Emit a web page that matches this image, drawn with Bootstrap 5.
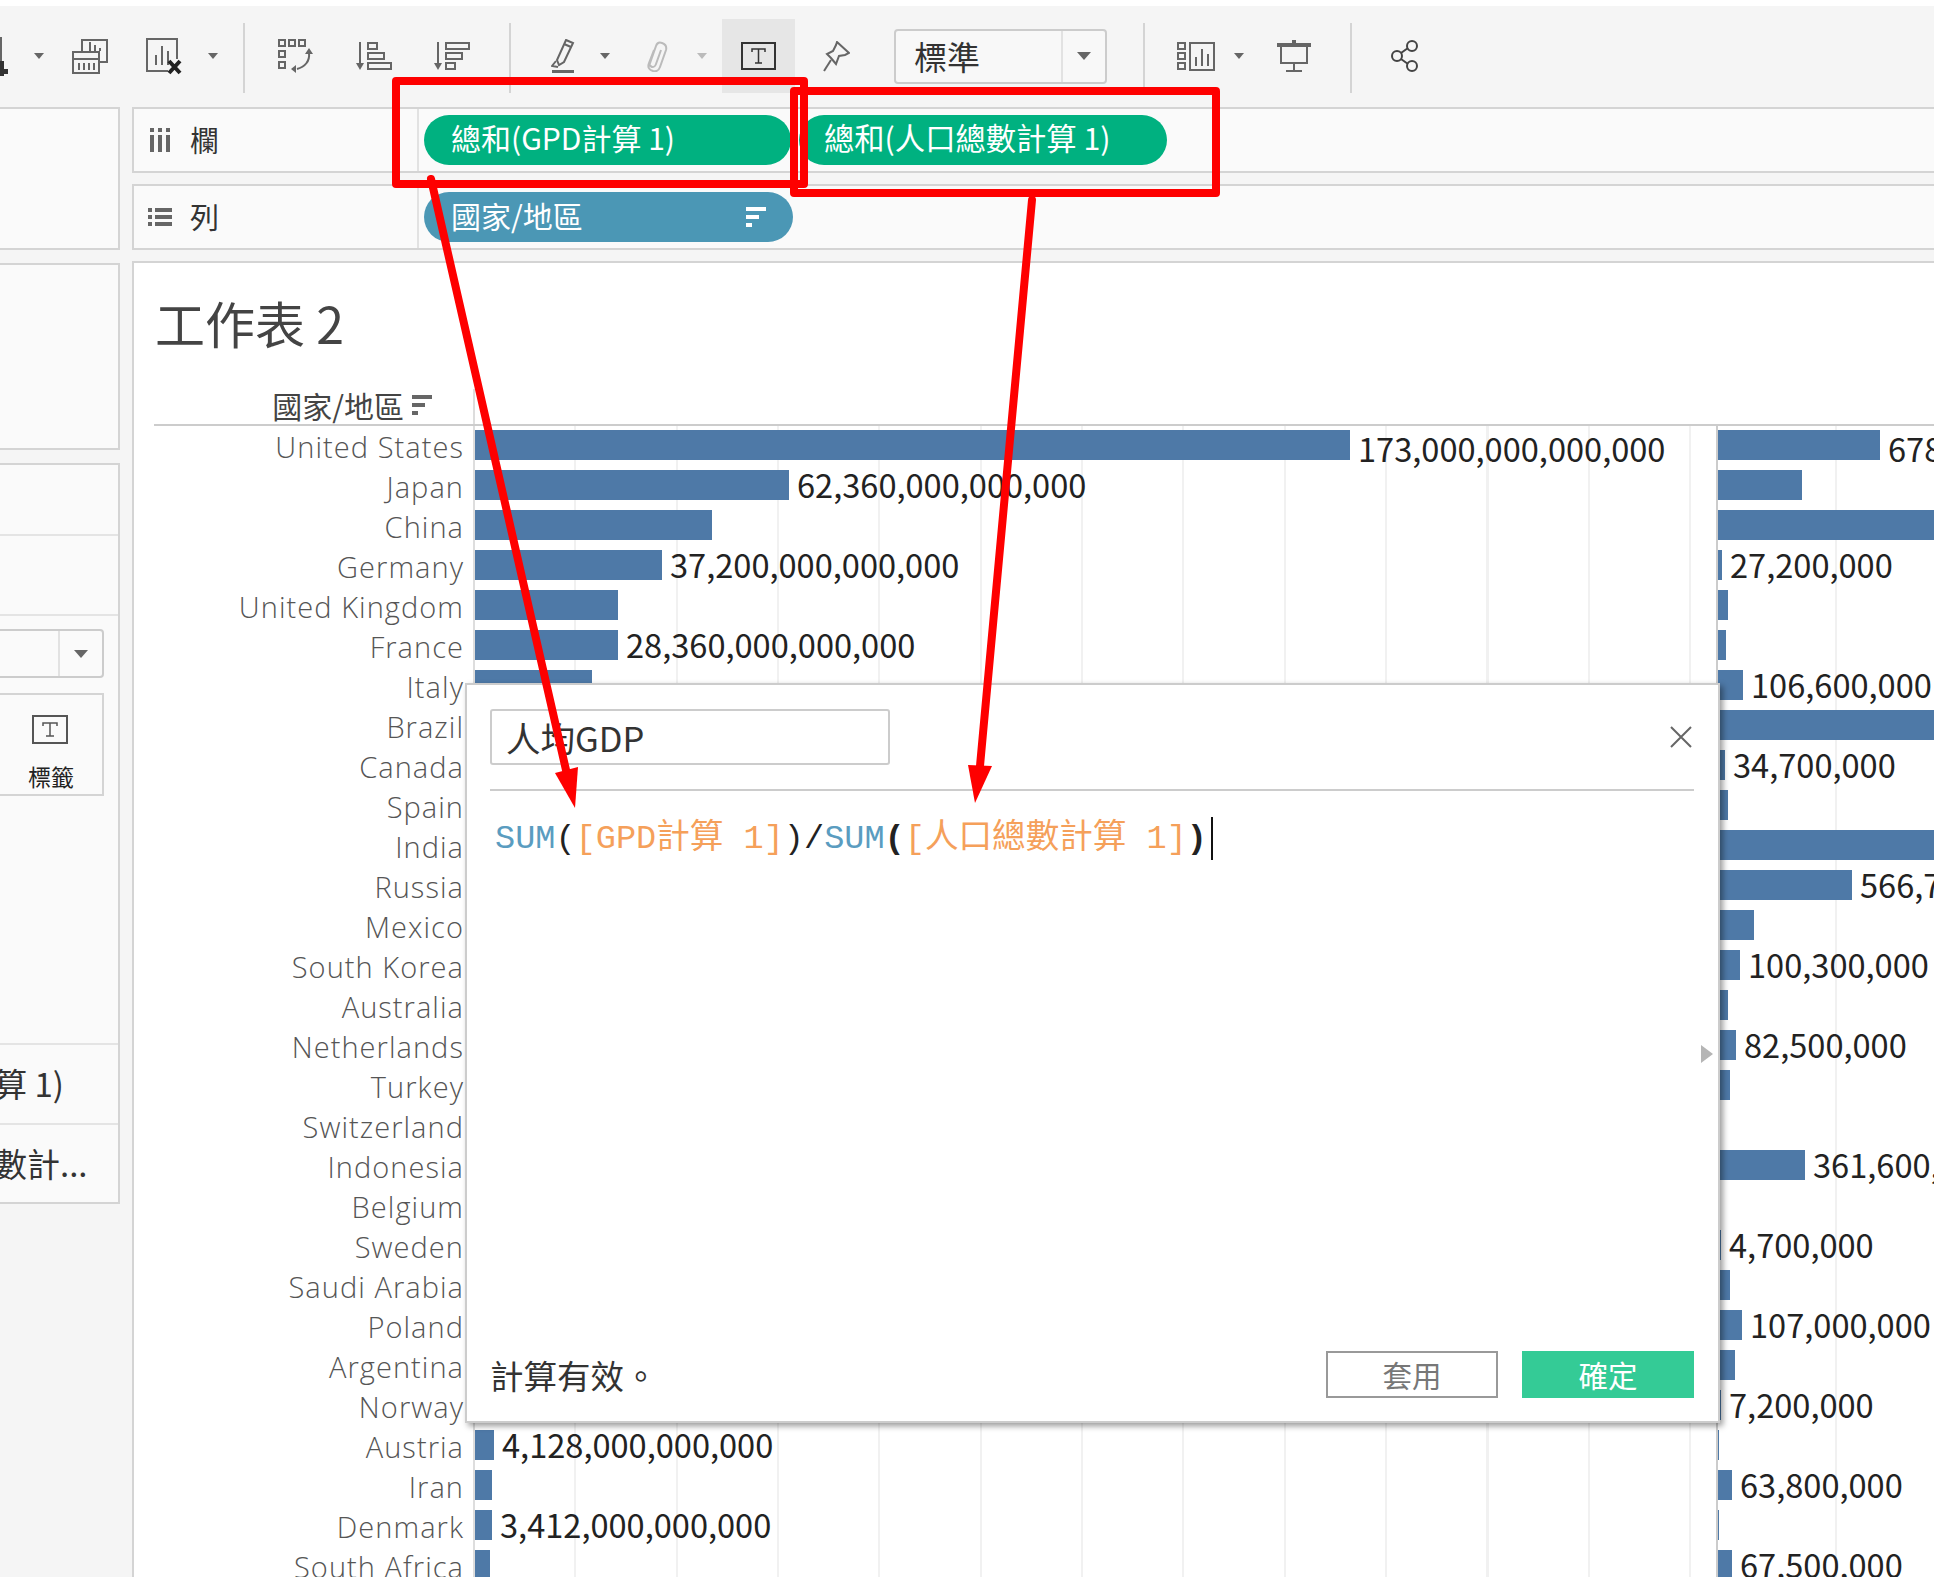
<!doctype html>
<html lang="zh-Hant">
<head>
<meta charset="utf-8">
<title>工作表 2</title>
<link href="https://cdn.jsdelivr.net/npm/bootstrap@5.3.0/dist/css/bootstrap.min.css" rel="stylesheet">
<style>
:root{--line:#d4d4d4;--cjk:"Noto Sans CJK TC","Noto Sans",sans-serif}
html,body{margin:0;width:1934px;height:1577px;overflow:hidden;background:#fff}
body{font-family:var(--cjk);color:#333;position:relative}
.appwrap{margin-top:6px;background:#f5f5f5;height:1571px;overflow:hidden}
.tbar{height:87px;padding-top:13px;margin-bottom:14px}
.tbar>*{flex:none}
.tbar svg{display:block}
.caret{width:0;height:0;border-left:5px solid transparent;border-right:5px solid transparent;border-top:6px solid #666}
.caret-lt{border-top-color:#bbb}
.caret-big{border-left-width:7px;border-right-width:7px;border-top-width:8px}
.vsep{width:2px;height:70px;background:#d4d4d4;align-self:flex-end}
.tactive{width:73px;height:74px;background:#e6e6e6}
.m15{margin-left:15px}.m19{margin-left:19px}.m25{margin-left:25px}.m26{margin-left:26px}.m27{margin-left:27px}.m28{margin-left:28px}.m32{margin-left:32px}.m33{margin-left:33px}.m35{margin-left:35px}.m36{margin-left:36px}.m38{margin-left:38px}.m39{margin-left:39px}.m40{margin-left:40px}.m42{margin-left:42px}.m43{margin-left:43px}.m44{margin-left:44px}
.modesel{width:213px;height:55px;border:2px solid #ccc;border-radius:4px;background:#f8f8f8;font-size:33px;line-height:1}
.modesel .seltext{flex:1;padding-left:18px}
.modesel .selbtn{width:44px;height:100%;border-left:2px solid #e2e2e2}
.sideCol{width:120px;flex:none}
.pane{background:#fafafa;border:2px solid var(--line);border-left:0}
.p-a{height:143px}
.p-b{height:187px;margin-top:13px}
.p-c{height:741px;margin-top:13px;position:relative;font-size:33px;color:#333}
.sec{border-bottom:2px solid #e4e4e4;flex:none}
.s1{height:71px}.s2{height:80px}
.s3{height:429px;padding-top:13px}
.s4{height:80px;white-space:nowrap}
.s5{height:78px;white-space:nowrap;border-bottom:0}
.cuttext{margin-left:-6px}
.marksel{width:104px;height:49px;border:2px solid #ccc;border-left:0;border-radius:0 4px 4px 0;background:#fafafa}
.marksel i{display:flex;width:44px;height:100%;border-left:2px solid #e2e2e2;align-items:center;justify-content:center;margin-left:auto}
.markcard{width:104px;height:103px;margin-top:15px;border:2px solid var(--line);border-left:0;padding-top:20px;text-align:center;font-size:23px;line-height:1;color:#222}
.markcard svg{display:block;margin:0 auto 21px;position:relative;left:-1px}
.mainCol{margin-left:12px;flex:1;min-width:0}
.shelf{height:66px;background:#fafafa;border:2px solid var(--line);border-right:0;margin-bottom:11px}
.shelf-name{width:285px;height:100%;border-right:2px solid #e2e2e2;padding-left:16px;font-size:29px;color:#333;gap:20px}
.lst{margin-left:-2px;margin-right:-2px}
.shelf-body{padding-left:5px;gap:8px}
.pillx{height:50px;border-radius:25px;color:#fff;font-size:30px;line-height:45px;padding-left:27px;white-space:nowrap}
.pill-g{background:#00b180}
.pill-1{width:367px}.pill-2{width:368px;padding-left:25px;font-size:30.300px}
.pill-b{background:#4b97b5;width:369px;padding-right:27px}
.pill-b span{position:relative;top:-2px}
.sheet{background:#fff;border:2px solid var(--line);border-right:0;border-bottom:0;height:1400px;padding-top:30px}
.sheettitle{font-size:50px;line-height:58px;padding-left:21px;color:#444;height:96px}
.gridhead{height:37px;margin-left:20px;border-bottom:2px solid #ccc}
.headname{width:321px;height:100%;border-right:2px solid #ddd;font-size:30px;line-height:1;color:#444;padding-right:41px;padding-bottom:4px;gap:8px}
.gridbody{margin-left:20px}
.namecol{width:321px;flex:none;border-right:2px solid #ddd;padding-top:4px}
.nm{height:40px;line-height:33px;text-align:right;padding-right:9px;font-family:"Open Sans",sans-serif;font-weight:300;font-size:29px;letter-spacing:1.050px;color:#555;white-space:nowrap}
.barpane{padding-top:4px;flex:none}
.bp1{width:1241px;background:repeating-linear-gradient(90deg,transparent 0,transparent 99.3px,#f1f1f1 99.3px,#f1f1f1 101.35px)}
.bp2{flex:1;border-left:2px solid #ccc;overflow:hidden;background:linear-gradient(90deg,transparent 117px,#f1f1f1 117px,#f1f1f1 119px,transparent 119px)}
.brow{height:40px;gap:8px;white-space:nowrap}
.brect{height:30px;background:#4e79a7;flex:none}
.bval{font-family:"Noto Sans CJK TC",sans-serif;font-size:32.6px;line-height:30px;color:#222;position:relative;top:-1px}
.brow:first-child .bval{top:3px}
.calcdlg{position:absolute;left:465px;top:683px;width:1255px;height:740px;background:#fff;border:2px solid #ccc;box-shadow:3px 3px 6px rgba(0,0,0,.4);padding:24px 24px 23px 23px;z-index:5}
.calcname{width:400px;height:56px;border:2px solid #ccc;border-radius:3px;font-size:34.5px;line-height:52px;padding-left:14px;color:#333}
.xbtn{margin-right:2px}
.dlgsep{height:2px;background:#ccc;margin-top:24px}
.formula{margin-top:26px;padding-left:5px;height:44px;font-family:"Liberation Mono",monospace,"Noto Sans CJK TC";font-size:33.6px;line-height:44px;white-space:pre;font-weight:400}
.fn{color:#5a9cc0}.fld{color:#f5a05a}.par{color:#222}
.cursor{display:inline-block;width:2px;height:43px;background:#111;vertical-align:top;margin-left:4px}
.dlgfoot{margin-top:auto}
.calcok{font-size:33.5px;line-height:47px;color:#333}
.btnx{width:172px;height:47px;padding:0;border-radius:0;font-size:29.5px;line-height:1}
.btn-apply{background:#fff;border:2px solid #999;color:#777}
.btn-conf{background:#34cb96;border:0;color:#fff;margin-left:24px}
.scrolltri{position:absolute;left:1234px;top:360px;width:0;height:0;border-left:12px solid #b5b5b5;border-top:9px solid transparent;border-bottom:9px solid transparent}
.annot{position:absolute;left:0;top:0;z-index:9;pointer-events:none}
</style>
</head>
<body>
<div class="appwrap">
  <div class="tbar d-flex align-items-center">
    <svg width="8" height="40" viewBox="0 0 8 40"><path d="M0 1h2v26H0z" fill="#666"/><path d="M3 25h1v8h4v5H4v2H0V25z" fill="#333"/></svg>
    <span class="caret m26"></span>
    <svg class="m28" width="36" height="35" viewBox="0 0 36 35" fill="none" stroke="#666" stroke-width="2"><path d="M10 13V1h25v22H27"/><path d="M1 13h26v21H1z" fill="#f5f5f5"/><path d="M1 20h26"/><path d="M7 24v7M12 24v7M17 24v7M22 24v7M18 12V3M23 12V6M28 12V9"/></svg>
    <svg class="m38" width="36" height="37" viewBox="0 0 36 37" fill="none" stroke="#666" stroke-width="2"><path d="M22 33H1V1h30v20"/><path d="M10 27V17M16 27V8M22 27V13"/><path d="M23 23l11 12M34 23L23 35" stroke="#222" stroke-width="4"/></svg>
    <span class="caret m26"></span>
    <span class="vsep m25"></span>
    <svg class="m33" width="35" height="35" viewBox="0 0 35 35" fill="none" stroke="#666" stroke-width="2"><path d="M1 1h6v6H1zM11 1h6v6h-6zM21 1h6v6h-6zM1 12h6v6H1zM1 23h6v6H1z"/><path d="M31 14c1 8-4 14-12 16"/><path d="M27 15l4-6 4 6zM18 26l-5 4 5 4z" fill="#666" stroke="none"/></svg>
    <svg class="m43" width="36" height="29" viewBox="0 0 36 29" fill="none" stroke="#666" stroke-width="2"><path d="M4 0v24"/><path d="M0 21h8l-4 7z" fill="#666" stroke="none"/><path d="M12 1h9v6h-9zM12 11h16v6H12zM12 21h23v6H12z"/></svg>
    <svg class="m42" width="36" height="29" viewBox="0 0 36 29" fill="none" stroke="#666" stroke-width="2"><path d="M4 0v24"/><path d="M0 21h8l-4 7z" fill="#666" stroke="none"/><path d="M12 1h23v6H12zM12 11h16v6H12zM12 21h9v6h-9z"/></svg>
    <span class="vsep m39"></span>
    <svg class="m40" width="24" height="34" viewBox="0 0 24 34" fill="none" stroke="#666" stroke-width="2"><path d="M15 1l7 3-9 19-5 3-2-5z"/><path d="M13 5l7 3"/><path d="M5 22l-4 5 6 1" /><path d="M1 31h22v3H1z" fill="#666" stroke="none"/></svg>
    <span class="caret m25"></span>
    <svg class="m35" width="25" height="31" viewBox="0 0 25 31" fill="none" stroke="#bbb" stroke-width="2"><path d="M9 9L4 22c-2 5 1 7 4 8 4 1 6-1 7-4l6-17c1-4-1-6-4-7-3-1-5 0-6 3l-6 17c-1 2 0 3 2 4 2 0 3 0 4-3l5-14"/></svg>
    <span class="caret caret-lt m27"></span>
    <div class="tactive m15 d-flex align-items-center justify-content-center">
      <svg width="35" height="28" viewBox="0 0 35 28" fill="none" stroke="#333" stroke-width="2"><rect x="1" y="1" width="33" height="26"/><path d="M11 10V7h13v3M17.500 7v14M14 21h7" stroke-width="1.500"/></svg>
    </div>
    <svg class="m27" width="28" height="31" viewBox="0 0 28 31" fill="none" stroke="#666" stroke-width="2"><path d="M15 1l12 11-4 2-6 1-3 8-5-6-4-4 6-3 3-6z"/><path d="M9 19l-7 11"/></svg>
    <div class="modesel m44 d-flex align-items-center">
      <div class="seltext">標準</div>
      <div class="selbtn d-flex align-items-center justify-content-center"><span class="caret caret-big"></span></div>
    </div>
    <span class="vsep m36"></span>
    <svg class="m32" width="38" height="29" viewBox="0 0 38 29" fill="none" stroke="#666" stroke-width="2"><path d="M1 1h7v6H1zM1 11h7v6H1zM1 21h7v6H1zM13 1h24v27H13z"/><path d="M19 24v-9M25 24V7M31 24V12"/></svg>
    <span class="caret m19"></span>
    <svg class="m33" width="34" height="32" viewBox="0 0 34 32" fill="none" stroke="#666" stroke-width="2"><path d="M0 3h34v4H0z" fill="#666" stroke="none"/><path d="M15 0h4v3h-4z" fill="#666" stroke="none"/><path d="M4 6v17h26V6M17 23v8M9 31h16"/></svg>
    <span class="vsep m39"></span>
    <svg class="m39" width="28" height="32" viewBox="0 0 28 32" fill="none" stroke="#444" stroke-width="2"><circle cx="21" cy="6" r="5"/><circle cx="21" cy="26" r="5"/><circle cx="6" cy="16" r="5"/><path d="M10 13l7-5M10 19l7 5"/></svg>
  </div>
  <div class="d-flex">
    <div class="sideCol">
      <div class="pane p-a"></div>
      <div class="pane p-b"></div>
      <div class="pane p-c d-flex flex-column">
        <div class="sec s1"></div>
        <div class="sec s2"></div>
        <div class="sec s3">
          <div class="marksel"><i><span class="caret caret-big"></span></i></div>
          <div class="markcard">
            <svg width="36" height="29" viewBox="0 0 36 29" fill="none" stroke="#555" stroke-width="2"><rect x="1" y="1" width="34" height="27"/><path d="M11 11V8h14v3M18 8v13M14 21h8" stroke-width="1.500"/></svg>
            標籤
          </div>
        </div>
        <div class="sec s4 d-flex align-items-center"><span class="cuttext">算 1)</span></div>
        <div class="sec s5 d-flex align-items-center"><span class="cuttext">數計...</span></div>
      </div>
    </div>
    <div class="mainCol">
      <div class="shelf d-flex align-items-center">
        <div class="shelf-name d-flex align-items-center">
          <svg width="20" height="24" viewBox="0 0 20 24" fill="#666"><path d="M0 0h4v4H0zM8 0h4v4H8zM16 0h4v4h-4zM0 7h4v17H0zM8 7h4v17H8zM16 7h4v17h-4z"/></svg>
          <span>欄</span>
        </div>
        <div class="shelf-body d-flex align-items-center">
          <div class="pillx pill-g pill-1">總和(GPD計算 1)</div>
          <div class="pillx pill-g pill-2">總和(人口總數計算 1)</div>
        </div>
      </div>
      <div class="shelf d-flex align-items-center">
        <div class="shelf-name d-flex align-items-center">
          <svg width="24" height="18" viewBox="0 0 24 18" fill="#666" class="lst"><path d="M0 0h4v4H0zM7 0h17v4H7zM0 7h4v4H0zM7 7h17v4H7zM0 14h4v4H0zM7 14h17v4H7z"/></svg>
          <span>列</span>
        </div>
        <div class="shelf-body d-flex align-items-center">
          <div class="pillx pill-b d-flex justify-content-between align-items-center">
            <span>國家/地區</span>
            <svg width="20" height="20" viewBox="0 0 20 20" fill="#fff"><path d="M0 0h20v4H0zM0 8h13v4H0zM0 16h6v4H0z"/></svg>
          </div>
        </div>
      </div>
      <div class="sheet">
        <div class="sheettitle">工作表 2</div>
        <div class="gridhead d-flex">
          <div class="headname d-flex align-items-center justify-content-end">
            <span>國家/地區</span>
            <svg width="20" height="20" viewBox="0 0 20 20" fill="#666"><path d="M0 0h20v4H0zM0 8h13v4H0zM0 16h6v4H0z"/></svg>
          </div>
        </div>
        <div class="gridbody d-flex">
          <div class="namecol">
            <div class="nm">United States</div><div class="nm">Japan</div><div class="nm">China</div><div class="nm">Germany</div><div class="nm">United Kingdom</div><div class="nm">France</div><div class="nm">Italy</div><div class="nm">Brazil</div><div class="nm">Canada</div><div class="nm">Spain</div><div class="nm">India</div><div class="nm">Russia</div><div class="nm">Mexico</div><div class="nm">South Korea</div><div class="nm">Australia</div><div class="nm">Netherlands</div><div class="nm">Turkey</div><div class="nm">Switzerland</div><div class="nm">Indonesia</div><div class="nm">Belgium</div><div class="nm">Sweden</div><div class="nm">Saudi Arabia</div><div class="nm">Poland</div><div class="nm">Argentina</div><div class="nm">Norway</div><div class="nm">Austria</div><div class="nm">Iran</div><div class="nm">Denmark</div><div class="nm">South Africa</div>
          </div>
          <div class="barpane bp1">
            <div class="brow d-flex"><div class="brect" style="width:875px"></div><span class="bval">173,000,000,000,000</span></div>
            <div class="brow d-flex"><div class="brect" style="width:314px"></div><span class="bval">62,360,000,000,000</span></div>
            <div class="brow d-flex"><div class="brect" style="width:237px"></div></div>
            <div class="brow d-flex"><div class="brect" style="width:187px"></div><span class="bval">37,200,000,000,000</span></div>
            <div class="brow d-flex"><div class="brect" style="width:143px"></div></div>
            <div class="brow d-flex"><div class="brect" style="width:143px"></div><span class="bval">28,360,000,000,000</span></div>
            <div class="brow d-flex"><div class="brect" style="width:117px"></div></div>
            <div class="brow d-flex"></div><div class="brow d-flex"></div><div class="brow d-flex"></div><div class="brow d-flex"></div><div class="brow d-flex"></div><div class="brow d-flex"></div><div class="brow d-flex"></div><div class="brow d-flex"></div><div class="brow d-flex"></div><div class="brow d-flex"></div><div class="brow d-flex"></div>
            <div class="brow d-flex"></div><div class="brow d-flex"></div><div class="brow d-flex"></div><div class="brow d-flex"></div><div class="brow d-flex"></div><div class="brow d-flex"></div><div class="brow d-flex"></div>
            <div class="brow d-flex"><div class="brect" style="width:19px"></div><span class="bval">4,128,000,000,000</span></div>
            <div class="brow d-flex"><div class="brect" style="width:17px"></div></div>
            <div class="brow d-flex"><div class="brect" style="width:17px"></div><span class="bval">3,412,000,000,000</span></div>
            <div class="brow d-flex"><div class="brect" style="width:15px"></div></div>
          </div>
          <div class="barpane bp2">
            <div class="brow d-flex"><div class="brect" style="width:162px"></div><span class="bval">678,000,000</span></div>
            <div class="brow d-flex"><div class="brect" style="width:84px"></div></div>
            <div class="brow d-flex"><div class="brect" style="width:300px"></div></div>
            <div class="brow d-flex"><div class="brect" style="width:4px"></div><span class="bval">27,200,000</span></div>
            <div class="brow d-flex"><div class="brect" style="width:10px"></div></div>
            <div class="brow d-flex"><div class="brect" style="width:8px"></div></div>
            <div class="brow d-flex"><div class="brect" style="width:25px"></div><span class="bval">106,600,000</span></div>
            <div class="brow d-flex"><div class="brect" style="width:300px"></div></div>
            <div class="brow d-flex"><div class="brect" style="width:7px"></div><span class="bval">34,700,000</span></div>
            <div class="brow d-flex"><div class="brect" style="width:10px"></div></div>
            <div class="brow d-flex"><div class="brect" style="width:300px"></div></div>
            <div class="brow d-flex"><div class="brect" style="width:134px"></div><span class="bval">566,700,000</span></div>
            <div class="brow d-flex"><div class="brect" style="width:36px"></div></div>
            <div class="brow d-flex"><div class="brect" style="width:22px"></div><span class="bval">100,300,000</span></div>
            <div class="brow d-flex"><div class="brect" style="width:10px"></div></div>
            <div class="brow d-flex"><div class="brect" style="width:18px"></div><span class="bval">82,500,000</span></div>
            <div class="brow d-flex"><div class="brect" style="width:12px"></div></div>
            <div class="brow d-flex"></div>
            <div class="brow d-flex"><div class="brect" style="width:87px"></div><span class="bval">361,600,000</span></div>
            <div class="brow d-flex"></div>
            <div class="brow d-flex"><div class="brect" style="width:3px"></div><span class="bval">4,700,000</span></div>
            <div class="brow d-flex"><div class="brect" style="width:12px"></div></div>
            <div class="brow d-flex"><div class="brect" style="width:24px"></div><span class="bval">107,000,000</span></div>
            <div class="brow d-flex"><div class="brect" style="width:17px"></div></div>
            <div class="brow d-flex"><div class="brect" style="width:3px"></div><span class="bval">7,200,000</span></div>
            <div class="brow d-flex"><div class="brect" style="width:1px"></div></div>
            <div class="brow d-flex"><div class="brect" style="width:14px"></div><span class="bval">63,800,000</span></div>
            <div class="brow d-flex"><div class="brect" style="width:1px"></div></div>
            <div class="brow d-flex"><div class="brect" style="width:14px"></div><span class="bval">67,500,000</span></div>
          </div>
        </div>
      </div>
    </div>
  </div>
</div>

<div class="calcdlg d-flex flex-column">
  <div class="d-flex justify-content-between align-items-center">
    <div class="calcname">人均GDP</div>
    <svg class="xbtn" width="22" height="22" viewBox="0 0 22 22" fill="none" stroke="#666" stroke-width="2"><path d="M1 1l20 20M21 1L1 21"/></svg>
  </div>
  <div class="dlgsep"></div>
  <div class="formula"><span class="fn">SUM</span><span class="par">(</span><span class="fld">[GPD計算 1]</span><span class="par">)/</span><span class="fn">SUM</span><b class="par">(</b><span class="fld">[人口總數計算 1]</span><b class="par">)</b><span class="cursor"></span></div>
  <span class="scrolltri"></span>
  <div class="dlgfoot d-flex justify-content-between align-items-center">
    <div class="calcok">計算有效。</div>
    <div class="d-flex">
      <button type="button" class="btn btnx btn-apply">套用</button>
      <button type="button" class="btn btnx btn-conf">確定</button>
    </div>
  </div>
</div>

<svg class="annot" width="1934" height="1577" viewBox="0 0 1934 1577">
  <g fill="none" stroke="#fe0000" stroke-width="8" stroke-linejoin="round">
    <rect x="396" y="81" width="408" height="103"/>
    <rect x="794" y="91" width="422" height="102"/>
  </g>
  <g stroke="#fe0000" stroke-width="8" stroke-linecap="round">
    <path d="M431 179L566 770"/>
    <path d="M1032 200L980 766"/>
  </g>
  <g fill="#fe0000">
    <path d="M555 773L578 767L575 808Z"/>
    <path d="M968 765L992 766L975 803Z"/>
  </g>
</svg>
<script src="https://cdn.jsdelivr.net/npm/bootstrap@5.3.0/dist/js/bootstrap.bundle.min.js"></script>
</body>
</html>
